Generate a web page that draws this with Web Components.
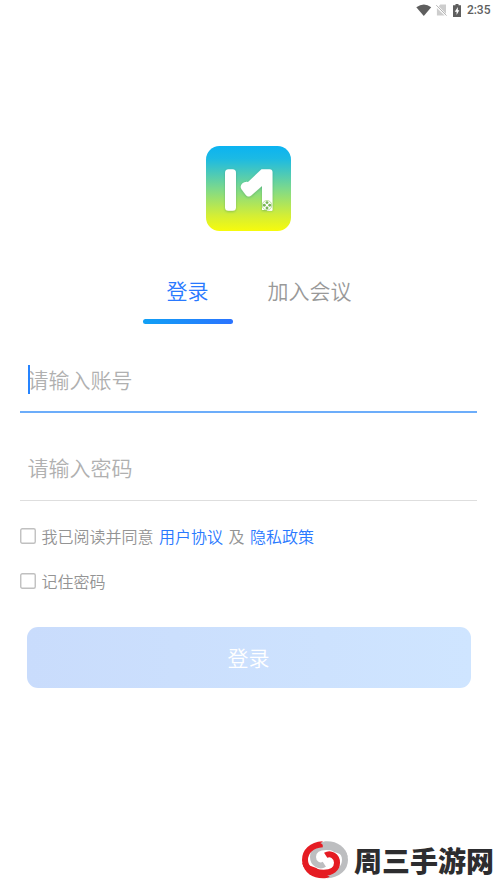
<!DOCTYPE html>
<html lang="zh-CN">
<head>
<meta charset="utf-8">
<title>登录</title>
<style>
html,body{margin:0;height:100%;background:#fff;overflow:hidden}
body{font-family:"Noto Sans CJK SC",sans-serif;font-weight:350;color:#999}
</style>
</head>
<body>
<login-page></login-page>
<script>
const define = (name, html) => {
  const t = document.createElement('template');
  t.innerHTML = html;
  customElements.define(name, class extends HTMLElement {
    constructor() {
      super();
      this.attachShadow({ mode: 'open' }).append(t.content.cloneNode(true));
    }
  });
};

define('status-bar', `
<style>
:host{display:flex;height:20px;align-items:center;justify-content:flex-end;padding-right:6.5px;box-sizing:border-box;font:500 12px/20px Roboto,sans-serif;color:#5e5e5e}
svg{display:block}
.wifi{margin-right:4px}.sim{margin-right:6px}.bat{margin-right:6px}
</style>
<svg class="wifi" width="16" height="12" viewBox="0 0 16 12"><path d="M.3 3.2Q8-2.4 15.2 3.2L7.8 11.9z" fill="#5e5e5e"/></svg>
<svg class="sim" width="11" height="12" viewBox="0 0 11 12"><path d="M4.3.6H10v9.4L2.8 2.3zM.9 4L8.6 11.6H.9z" fill="#cdcdcd"/><path d="M.3 1.2L10.5 11.6" stroke="#b4b4b4"/></svg>
<svg class="bat" width="8" height="13" viewBox="0 0 8 13"><path d="M2.5 0h3v1.3H8V13H0V1.3h2.5z" fill="#5e5e5e"/><path d="M4.8 3L1.8 7.8h1.8v3.1L6.3 6.2H4.8z" fill="#fff"/></svg>
<span>2:35</span>`);

define('app-logo', `
<style>:host{display:block;width:85px;height:85px}svg{display:block;overflow:visible}</style>
<svg width="85" height="85" viewBox="0 0 85 85">
<defs><linearGradient id="g" x2="0" y2="1"><stop stop-color="#0bb3f2"/><stop offset=".15" stop-color="#1cbae3"/><stop offset=".5" stop-color="#7cd98c"/><stop offset=".82" stop-color="#d4ee35"/><stop offset="1" stop-color="#f7fb0c"/></linearGradient>
<filter id="s" x="-20%" y="-20%" width="140%" height="140%"><feDropShadow dx="0" dy=".8" stdDeviation=".8" flood-color="#247759" flood-opacity=".4"/></filter></defs>
<rect width="85" height="85" rx="13.5" fill="url(#g)"/>
<g fill="#fff" filter="url(#s)"><rect x="19" y="23.2" width="11" height="41.5" rx="3.5"/>
<path d="M55.5 23.3h8q3 0 3 3V64H56V40L45.5 49.3q-3 2.4-5.5 0l-4.5-6q-2-3.2 1-6 2.2-2 5.5-1.4z"/></g>
<circle cx="61" cy="59.3" r="5" fill="#fff"/><path d="M61 64.3h5.3" stroke="#fff" stroke-width="1.2"/>
<circle cx="61" cy="59.3" r="4.8" fill="none" stroke="#a5d080" stroke-width=".7"/>
<g fill="#79b655"><circle cx="61" cy="56.6" r="1.45"/><circle cx="61" cy="62" r="1.45"/><circle cx="58.3" cy="59.3" r="1.45"/><circle cx="63.7" cy="59.3" r="1.45"/></g>
</svg>`);

define('mode-tab', `
<style>
:host{display:flex;flex-direction:column;align-items:center;width:90px;font-size:21px;line-height:32px;color:#999;white-space:nowrap}
:host([active]){color:#2979ff}
i{display:block;width:90px;height:5.5px;border-radius:3px;margin-top:12.5px}
:host([active]) i{background:linear-gradient(90deg,#10a0f5,#2b73ff)}
</style><span><slot></slot></span><i></i>`);

define('text-field', `
<style>
:host{display:flex;position:relative;height:64px;box-sizing:border-box;padding:0 8px 3px 7.5px;align-items:center;border-bottom:1px solid #dedede;font-size:21px;line-height:32px;color:#b0b0b0}
:host([focused]){border-bottom:2px solid #6cadfa}
b{display:none;position:absolute;left:7.5px;top:16px;width:2.5px;height:29px;background:#2684ff}
:host([focused]) b{display:block}
</style><span><slot></slot></span><b></b>`);

define('check-row', `
<style>
:host{display:flex;align-items:center;height:24px;font-size:16px;line-height:24px;color:#949494;white-space:nowrap}
svg{display:block;margin-right:5.5px}
div{display:flex;gap:5.5px;padding-bottom:1px}
::slotted(a){color:#2979ff}
</style><svg width="16" height="16"><rect x=".75" y=".75" width="14.5" height="14.5" rx="1.5" fill="#fff" stroke="#c0c0c0" stroke-width="1.4"/></svg><div><slot></slot></div>`);

define('submit-button', `
<style>
:host{display:flex;height:61px;border-radius:11px;align-items:center;justify-content:center;background:linear-gradient(90deg,#c9dcfc,#cfe5ff);color:#fff;font-size:21px;line-height:32px}
span{padding-bottom:2px}
</style><span><slot></slot></span>`);

define('site-mark', `
<style>
:host{display:flex;align-items:center;justify-content:flex-end;gap:3px;height:44px;color:#2d2d2f;font-size:28px;line-height:40px;font-weight:900;white-space:nowrap}
svg{display:block}
</style>
<svg width="52" height="44" viewBox="0 0 156 132">
<g fill="none" stroke-width="18">
<path d="M84 112C118 110 138 90 138 65 138 38 112 27 82 27 56 27 42 40 42 57c0 20 20 31 34 22" stroke="#bdbec0"/>
<path d="M71 19C37 21 18 41 18 66c0 27 26 38 56 38 26 0 40-13 40-30 0-20-20-31-34-22" stroke="#e51c23"/>
</g>
<path d="M10 75c5 28 30 46 62 46 8 0 14-2 20-5L52 90z" fill="#e51c23"/>
<path d="M146 56c-5-28-30-46-62-46-8 0-14 2-20 5l40 26z" fill="#bdbec0"/>
</svg><span><slot></slot></span>`);

define('login-page', `
<style>
:host{display:flex;flex-direction:column;height:885px;width:497px;background:#fff}
app-logo{margin:126px 0 0 206px}
nav{display:flex;gap:32px;margin:43px 0 0 142.5px;height:50px}
form{display:flex;flex-direction:column;padding:0 20px;margin-top:25px}
text-field+text-field{margin-top:24px}
.agree{margin-top:23px}.remember{margin-top:21px}
submit-button{margin:34px 6.5px 0 6.5px}
site-mark{margin:auto 3px 3px 0}
</style>
<status-bar></status-bar>
<app-logo></app-logo>
<nav><mode-tab active>登录</mode-tab><mode-tab>加入会议</mode-tab></nav>
<form>
<text-field focused>请输入账号</text-field>
<text-field>请输入密码</text-field>
<check-row class="agree"><span>我已阅读并同意</span><a>用户协议</a><span>及</span><a>隐私政策</a></check-row>
<check-row class="remember"><span>记住密码</span></check-row>
<submit-button>登录</submit-button>
</form>
<site-mark>周三手游网</site-mark>`);
</script>
</body>
</html>
